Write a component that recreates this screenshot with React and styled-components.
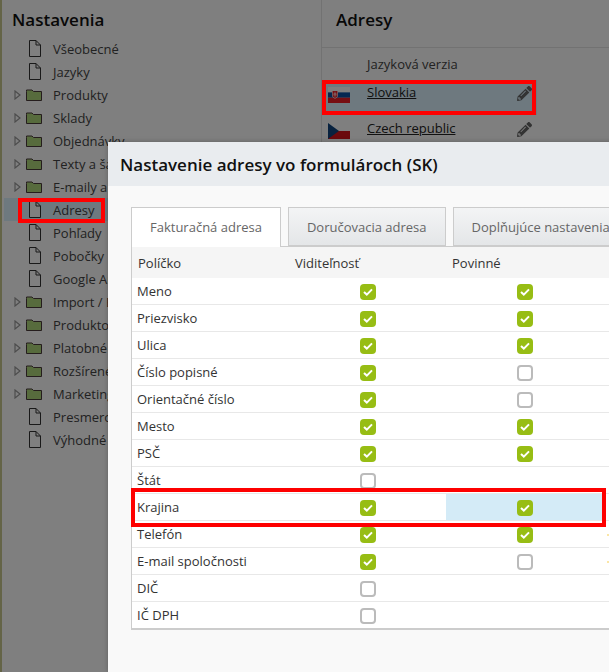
import React from "react";
import styled, { createGlobalStyle, css } from "styled-components";
import { FaPencilAlt } from "react-icons/fa";

const Global = createGlobalStyle`
  html, body { margin: 0; padding: 0; background: #fff; }
  body { font-family: "Open Sans", "Liberation Sans", sans-serif; font-size: 13px; color: #444; }
`;

const redFrame = css`
  content: "";
  position: absolute;
  box-sizing: border-box;
  border: 4px solid #fe0000;
  z-index: 3;
  pointer-events: none;
`;

const Page = styled.div`
  position: relative;
  width: 609px;
  height: 672px;
  overflow: hidden;
  display: flex;
  background: #fff;
`;

const Strip = styled.div`
  width: 4px;
  flex: none;
  background: linear-gradient(90deg, #c9c98f 0 2px, #fff 2px);
`;

const Sidebar = styled.aside`
  width: 317px;
  flex: none;
  border-right: 1px solid #e4e4e4;
`;

const SideTitle = styled.h2`
  margin: 0;
  height: 37px;
  padding: 8px 0 0 8px;
  box-sizing: border-box;
  font-size: 17px;
  line-height: 24px;
  font-weight: 600;
  color: #111;
`;

const NavList = styled.ul`
  list-style: none;
  margin: 0;
  padding: 0;
`;

const NavItem = styled.li`
  position: relative;
  height: 23px;
  display: flex;
  align-items: center;
  padding-left: 10px;
  white-space: nowrap;
  color: #444;
  background: ${(p) => (p.$active ? "#dcf2ff" : "transparent")};
  ${(p) =>
    p.$active &&
    css`
      &::after {
        ${redFrame}
        left: 14px;
        top: 0;
        width: 87px;
        height: 25px;
      }
    `}
`;

const ArrowSlot = styled.span`
  width: 12px;
  height: 10px;
  flex: none;
  display: flex;
  align-items: center;
  margin-top: 1px;
`;

const IconSlot = styled.span`
  width: 16px;
  margin-right: 11px;
  flex: none;
  display: flex;
  align-items: center;
  justify-content: center;
`;

const Main = styled.main`
  flex: 1;
  min-width: 0;
`;

const MainTitle = styled.h2`
  margin: 0;
  height: 48px;
  padding: 8px 0 0 14px;
  box-sizing: border-box;
  border-bottom: 1px solid #e4e4e4;
  font-size: 17px;
  line-height: 24px;
  font-weight: 600;
  color: #111;
`;

const VersionHead = styled.div`
  height: 32px;
  width: 215px;
  padding-left: 45px;
  box-sizing: border-box;
  line-height: 32px;
  color: #444;
`;

const LangRow = styled.div`
  position: relative;
  width: 215px;
  height: 35px;
  margin-bottom: 1px;
  display: flex;
  align-items: flex-start;
  padding: 3px 5px 0 6px;
  box-sizing: border-box;
  background: ${(p) => (p.$active ? "#dcf2ff" : "transparent")};
  ${(p) =>
    p.$active &&
    css`
      &::after {
        ${redFrame}
        inset: 0 1px 0 0;
      }
    `}
`;

const FlagBox = styled.span`
  width: 39px;
  height: 24px;
  flex: none;
  padding-top: 4px;
  box-sizing: border-box;
  display: block;
`;

const LangName = styled.a`
  flex: 1;
  line-height: 18px;
  color: #222;
  text-decoration: underline;
`;

const PencilBox = styled.span`
  flex: none;
  color: #666;
  font-size: 15px;
  display: flex;
  padding: 3px 0 0;
`;

const Backdrop = styled.div`
  position: absolute;
  inset: 0;
  background: rgba(0, 0, 0, 0.5);
  z-index: 1;
`;

const Modal = styled.section`
  position: absolute;
  left: 108px;
  top: 142px;
  bottom: 0;
  width: 720px;
  background: #f9f9f9;
  box-shadow: 0 0 5px rgba(0, 0, 0, 0.25);
  z-index: 2;
`;

const ModalHead = styled.h3`
  margin: 0;
  height: 44px;
  padding-left: 12px;
  background: #e9ecef;
  font-size: 17px;
  line-height: 46px;
  font-weight: 600;
  color: #111;
`;

const ModalBody = styled.div`
  padding: 21px 0 0 23px;
`;

const Tabs = styled.div`
  display: flex;
  gap: 7px;
  height: 40px;
  margin-bottom: -1px;
`;

const Tab = styled.div`
  position: relative;
  z-index: 1;
  box-sizing: border-box;
  padding: 0 18px;
  border: 1px solid #ccc;
  line-height: 38px;
  white-space: nowrap;
  color: #666;
  ${(p) =>
    p.$active
      ? css`
          background: #fff;
          border-bottom: none;
          height: 40px;
        `
      : css`
          background: linear-gradient(#f3f4f5, #e4e6e8);
          height: 39px;
        `}
`;

const Table = styled.div`
  width: 680px;
  box-sizing: border-box;
  background: #fff;
  border: 1px solid #ccc;
  border-width: 1px 0 2px 1px;
`;

const HeadRow = styled.div`
  display: grid;
  grid-template-columns: 157px 157px 157px 1fr;
  height: 31px;
  background: #f5f5f5;
`;

const HeadCell = styled.div`
  padding-left: 6px;
  line-height: 32px;
  color: #333;
`;

const Row = styled.div`
  position: relative;
  display: grid;
  grid-template-columns: 157px 157px 157px 1fr;
  height: 27px;
  box-sizing: border-box;
  border-bottom: 1px solid #e8e8e8;
  &:last-child { border-bottom: none; height: 26px; }
  ${(p) =>
    p.$marked &&
    css`
      &::after {
        ${redFrame}
        left: -1px;
        top: -6px;
        width: 475px;
        height: 39px;
      }
    `}
`;

const NameCell = styled.div`
  padding-left: 5px;
  line-height: 26px;
  color: #333;
`;

const CheckCell = styled.div`
  display: flex;
  align-items: center;
  justify-content: center;
  padding-top: 1px;
  margin-bottom: ${(p) => (p.$hi ? "0" : "0")};
  background: ${(p) => (p.$hi ? "#d4ebf7" : "transparent")};
`;

const NoteCell = styled.div`
  display: flex;
  align-items: center;
`;

const Note = styled.span`
  width: 8px;
  height: 2px;
  margin: 1px 0 0 4px;
  background: #fbe6a6;
`;

const Box = styled.span`
  width: 16px;
  height: 16px;
  box-sizing: border-box;
  border-radius: 4px;
  display: flex;
  align-items: center;
  justify-content: center;
  background: ${(p) => (p.$on ? "#97bd14" : "#fff")};
  border: ${(p) => (p.$on ? "none" : "2px solid #bbb")};
`;

const Check = () => (
  <Box $on>
    <svg width="10" height="8" viewBox="0 0 10 8" fill="none" stroke="#fff" strokeWidth="2">
      <path d="M1 4 L3.8 6.6 L9 1.4" />
    </svg>
  </Box>
);

const FileIcon = () => (
  <svg width="13" height="17" viewBox="0 0 13 17" fill="#fff" stroke="#333" strokeWidth="1">
    <path d="M1.5 .5 H8 L12.5 5 V16.5 H1.5 Z" />
    <path d="M8 .5 V5 H12.5" fill="none" />
  </svg>
);

const FolderIcon = () => (
  <svg width="16" height="12" viewBox="0 0 16 12" fill="#aed67a" stroke="#4a3a3a" strokeWidth="1">
    <path d="M.5 2.5 V1 H6 L7.5 2.5 H15.5 V11.5 H.5 Z" />
  </svg>
);

const Arrow = () => (
  <svg width="7" height="10" viewBox="0 0 7 10" fill="#fff" stroke="#999" strokeWidth="1.2">
    <path d="M1 1 L6 5 L1 9 Z" />
  </svg>
);

const SkFlag = () => (
  <svg width="22" height="16" viewBox="0 0 22 16">
    <rect width="22" height="5.4" fill="#fff" />
    <rect y="5.4" width="22" height="5.3" fill="#0b4ea2" />
    <rect y="10.7" width="22" height="5.3" fill="#ee1c25" />
    <path d="M4 3.5 H10 V8.5 Q10 10.6 7 11.8 Q4 10.6 4 8.5 Z" fill="#fff" />
    <path d="M4.6 4.1 H9.4 V8.5 Q9.4 10.1 7 11.1 Q4.6 10.1 4.6 8.5 Z" fill="#ee1c25" />
    <path d="M6.7 4.8 H7.3 V6 H8.4 V6.6 H7.3 V7.6 H8.7 V8.2 H7.3 V9.8 H6.7 V8.2 H5.3 V7.6 H6.7 V6.6 H5.6 V6 H6.7 Z" fill="#fff" />
  </svg>
);

const CzFlag = () => (
  <svg width="22" height="16" viewBox="0 0 22 16">
    <rect width="22" height="8" fill="#fff" />
    <rect y="8" width="22" height="8" fill="#d7141a" />
    <path d="M0 0 L11 8 L0 16 Z" fill="#11457e" />
  </svg>
);

const nav = [
  ["f", "Všeobecné"],
  ["f", "Jazyky"],
  ["d", "Produkty"],
  ["d", "Sklady"],
  ["d", "Objednávky"],
  ["d", "Texty a šablóny"],
  ["d", "E-maily a notifikácie"],
  ["f", "Adresy", true],
  ["f", "Pohľady"],
  ["f", "Pobočky"],
  ["f", "Google Analytics"],
  ["d", "Import / Export"],
  ["d", "Produktové feedy"],
  ["d", "Platobné metódy"],
  ["d", "Rozšírené nastavenia"],
  ["d", "Marketing"],
  ["f", "Presmerovania"],
  ["f", "Výhodné ponuky"],
];

const rows = [
  ["Meno", 1, 1],
  ["Priezvisko", 1, 1],
  ["Ulica", 1, 1],
  ["Číslo popisné", 1, 0],
  ["Orientačné číslo", 1, 0],
  ["Mesto", 1, 1],
  ["PSČ", 1, 1],
  ["Štát", 0, null],
  ["Krajina", 1, 1],
  ["Telefón", 1, 1],
  ["E-mail spoločnosti", 1, 0],
  ["DIČ", 0, null],
  ["IČ DPH", 0, null],
];

const Mark = ({ on }) => (on === null ? null : on ? <Check /> : <Box />);

export default function App() {
  return (
    <Page>
      <Global />
      <Strip />
      <Sidebar>
        <SideTitle>Nastavenia</SideTitle>
        <NavList>
          {nav.map(([kind, label, active]) => (
            <NavItem key={label} $active={active}>
              <ArrowSlot>{kind === "d" && <Arrow />}</ArrowSlot>
              <IconSlot>{kind === "d" ? <FolderIcon /> : <FileIcon />}</IconSlot>
              {label}
            </NavItem>
          ))}
        </NavList>
      </Sidebar>
      <Main>
        <MainTitle>Adresy</MainTitle>
        <VersionHead>Jazyková verzia</VersionHead>
        <LangRow $active>
          <FlagBox><SkFlag /></FlagBox>
          <LangName>Slovakia</LangName>
          <PencilBox><FaPencilAlt /></PencilBox>
        </LangRow>
        <LangRow>
          <FlagBox><CzFlag /></FlagBox>
          <LangName>Czech republic</LangName>
          <PencilBox><FaPencilAlt /></PencilBox>
        </LangRow>
      </Main>
      <Backdrop />
      <Modal>
        <ModalHead>Nastavenie adresy vo formulároch (SK)</ModalHead>
        <ModalBody>
          <Tabs>
            <Tab $active>Fakturačná adresa</Tab>
            <Tab>Doručovacia adresa</Tab>
            <Tab>Doplňujúce nastavenia</Tab>
          </Tabs>
          <Table>
            <HeadRow>
              <HeadCell>Políčko</HeadCell>
              <HeadCell>Viditeľnosť</HeadCell>
              <HeadCell>Povinné</HeadCell>
              <HeadCell />
            </HeadRow>
            {rows.map(([name, vis, req]) => (
              <Row key={name} $marked={name === "Krajina"}>
                <NameCell>{name}</NameCell>
                <CheckCell><Mark on={!!vis} /></CheckCell>
                <CheckCell $hi={name === "Krajina"}><Mark on={req === null ? null : !!req} /></CheckCell>
                <NoteCell>{(name === "Telefón" || name === "E-mail spoločnosti") && <Note />}</NoteCell>
              </Row>
            ))}
          </Table>
        </ModalBody>
      </Modal>
    </Page>
  );
}
